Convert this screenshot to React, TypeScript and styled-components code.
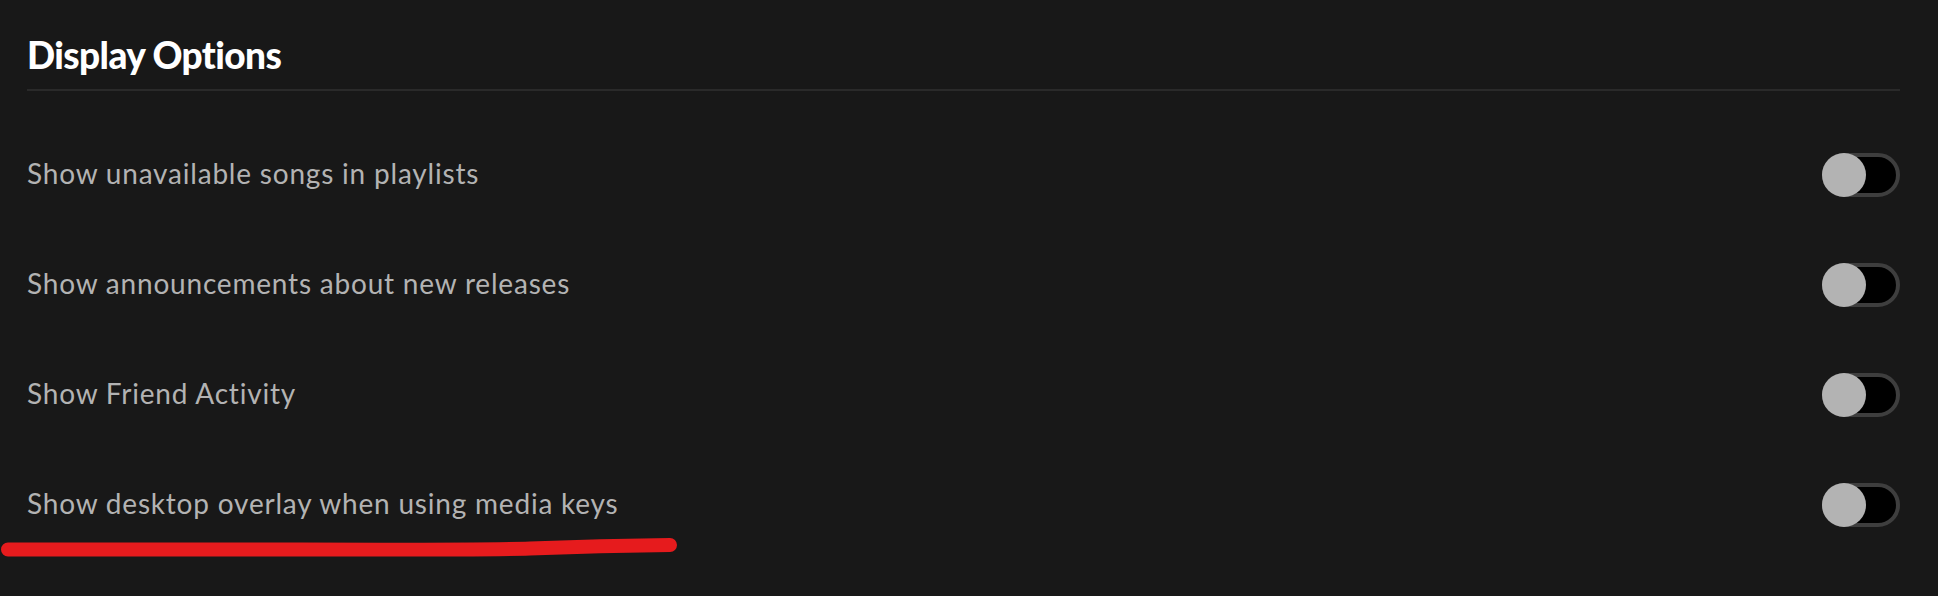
import React, {FC} from 'react';
import styled, {createGlobalStyle} from 'styled-components';

const settings = [
  'Show unavailable songs in playlists',
  'Show announcements about new releases',
  'Show Friend Activity',
  'Show desktop overlay when using media keys',
];

export default function App() {
  return (
    <>
      <GlobalStyle />
      <Page>
        <Title>Display Options</Title>
        <Divider />
        <List>
          {settings.map(label => (
            <Row key={label}>
              <Label>{label}</Label>
              <Toggle />
            </Row>
          ))}
        </List>
        <Scribble />
      </Page>
    </>
  );
}

const Toggle: FC = () => (
  <Track role="switch" aria-checked={false}>
    <Knob />
  </Track>
);

// red hand-drawn underline lying over the page
const Scribble: FC = () => (
  <ScribbleSvg width="690" height="24" viewBox="0 0 690 24">
    <path
      d="M8 12.5 L300 12.5 Q480 13 530 11.5 Q600 8.5 670 8"
      fill="none"
      stroke="#e61b1d"
      strokeWidth="14"
      strokeLinecap="round"
    />
  </ScribbleSvg>
);

const GlobalStyle = createGlobalStyle`
  html, body {
    margin: 0;
    background: #181818;
  }
  body {
    font-family: Lato, "Noto Sans", sans-serif;
  }
`;

const Page = styled.div`
  position: relative;
  height: 596px;
  padding: 33px 38px 0 27px;
  box-sizing: border-box;
`;

const Title = styled.h2`
  margin: 0;
  font-size: 37px;
  line-height: 1.2;
  font-weight: 900;
  letter-spacing: -0.6px;
  color: #fff;
`;

const Divider = styled.div`
  height: 2px;
  margin-top: 12px;
  background: #2a2a2a;
`;

const List = styled.div`
  display: flex;
  flex-direction: column;
  padding-top: 29px;
`;

const Row = styled.div`
  display: flex;
  align-items: center;
  justify-content: space-between;
  height: 110px;
`;

const Label = styled.span`
  font-size: 28px;
  line-height: 1.2;
  letter-spacing: 0.8px;
  color: #b3b3b3;
  padding-bottom: 3px;
`;

const Track = styled.div`
  display: flex;
  align-items: center;
  width: 78px;
  height: 44px;
  box-sizing: border-box;
  border: 4px solid #3e3e3e;
  border-radius: 22px;
  background: #000;
`;

const Knob = styled.div`
  flex: none;
  width: 44px;
  height: 44px;
  margin-left: -4px;
  border-radius: 50%;
  background: #b3b3b3;
`;

const ScribbleSvg = styled.svg`
  position: absolute;
  left: 0;
  top: 537px;
`;
